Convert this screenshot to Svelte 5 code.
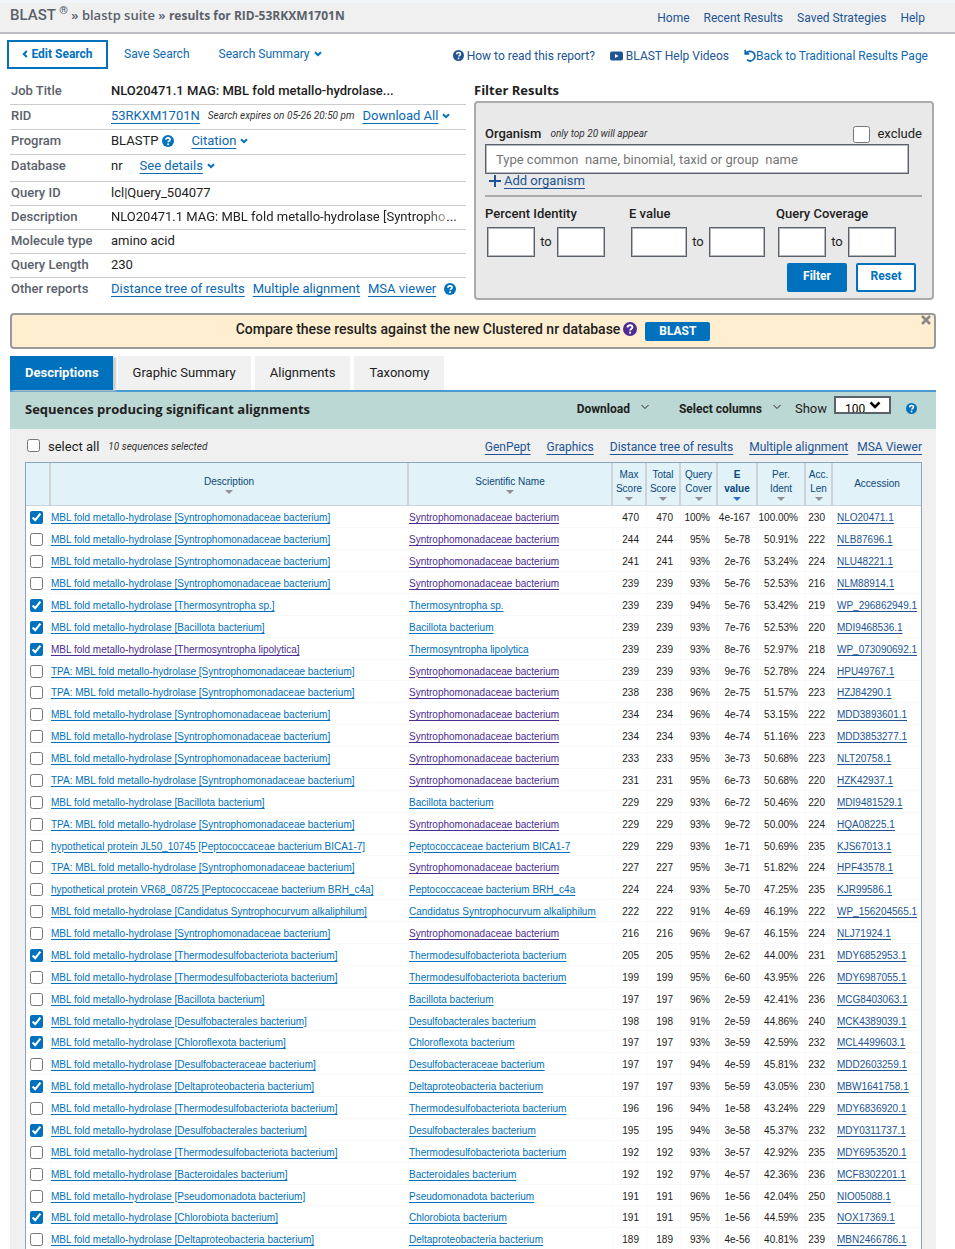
<script>
  const S = 'Syntrophomonadaceae bacterium';
  const M = 'MBL fold metallo-hydrolase';
  const T = 'TPA: MBL fold metallo-hydrolase';
  const TD = 'Thermodesulfobacteriota bacterium';
  // title, organism, score, cover, e value, identity, length, accession, selected
  const hits = [
    [M, S, 470, '100%', '4e-167', '100.00%', 230, 'NLO20471.1', true],
    [M, S, 244, '95%', '5e-78', '50.91%', 222, 'NLB87696.1', false],
    [M, S, 241, '93%', '2e-76', '53.24%', 224, 'NLU48221.1', false],
    [M, S, 239, '93%', '5e-76', '52.53%', 216, 'NLM88914.1', false],
    [M, 'Thermosyntropha sp.', 239, '94%', '5e-76', '53.42%', 219, 'WP_296862949.1', true],
    [M, 'Bacillota bacterium', 239, '93%', '7e-76', '52.53%', 220, 'MDI9468536.1', true],
    [M, 'Thermosyntropha lipolytica', 239, '93%', '8e-76', '52.97%', 218, 'WP_073090692.1', true],
    [T, S, 239, '93%', '9e-76', '52.78%', 224, 'HPU49767.1', false],
    [T, S, 238, '96%', '2e-75', '51.57%', 223, 'HZJ84290.1', false],
    [M, S, 234, '96%', '4e-74', '53.15%', 222, 'MDD3893601.1', false],
    [M, S, 234, '93%', '4e-74', '51.16%', 223, 'MDD3853277.1', false],
    [M, S, 233, '95%', '3e-73', '50.68%', 223, 'NLT20758.1', false],
    [T, S, 231, '95%', '6e-73', '50.68%', 220, 'HZK42937.1', false],
    [M, 'Bacillota bacterium', 229, '93%', '6e-72', '50.46%', 220, 'MDI9481529.1', false],
    [T, S, 229, '93%', '9e-72', '50.00%', 224, 'HQA08225.1', false],
    ['hypothetical protein JL50_10745', 'Peptococcaceae bacterium BICA1-7', 229, '93%', '1e-71', '50.69%', 235, 'KJS67013.1', false],
    [T, S, 227, '95%', '3e-71', '51.82%', 224, 'HPF43578.1', false],
    ['hypothetical protein VR68_08725', 'Peptococcaceae bacterium BRH_c4a', 224, '93%', '5e-70', '47.25%', 235, 'KJR99586.1', false],
    [M, 'Candidatus Syntrophocurvum alkaliphilum', 222, '91%', '4e-69', '46.19%', 222, 'WP_156204565.1', false],
    [M, S, 216, '96%', '9e-67', '46.15%', 224, 'NLJ71924.1', false],
    [M, TD, 205, '95%', '2e-62', '44.00%', 231, 'MDY6852953.1', true],
    [M, TD, 199, '95%', '6e-60', '43.95%', 226, 'MDY6987055.1', false],
    [M, 'Bacillota bacterium', 197, '96%', '2e-59', '42.41%', 236, 'MCG8403063.1', false],
    [M, 'Desulfobacterales bacterium', 198, '91%', '2e-59', '44.86%', 240, 'MCK4389039.1', true],
    [M, 'Chloroflexota bacterium', 197, '93%', '3e-59', '42.59%', 232, 'MCL4499603.1', true],
    [M, 'Desulfobacteraceae bacterium', 197, '94%', '4e-59', '45.81%', 232, 'MDD2603259.1', false],
    [M, 'Deltaproteobacteria bacterium', 197, '93%', '5e-59', '43.05%', 230, 'MBW1641758.1', true],
    [M, TD, 196, '94%', '1e-58', '43.24%', 229, 'MDY6836920.1', false],
    [M, 'Desulfobacterales bacterium', 195, '94%', '3e-58', '45.37%', 232, 'MDY0311737.1', true],
    [M, TD, 192, '93%', '3e-57', '42.92%', 235, 'MDY6953520.1', false],
    [M, 'Bacteroidales bacterium', 192, '97%', '4e-57', '42.36%', 236, 'MCF8302201.1', false],
    [M, 'Pseudomonadota bacterium', 191, '96%', '1e-56', '42.04%', 250, 'NIO05088.1', false],
    [M, 'Chlorobiota bacterium', 191, '95%', '1e-56', '44.59%', 235, 'NOX17369.1', true],
    [M, 'Deltaproteobacteria bacterium', 189, '93%', '4e-56', '40.81%', 239, 'MBN2466786.1', false]
  ].map(([title, organism, score, cover, evalue, identity, length, accession, selected]) => ({
    title, organism, score, cover, evalue, identity, length, accession, selected
  }));

  const narrow = [
    ['Max', 'Score'],
    ['Total', 'Score'],
    ['Query', 'Cover'],
    ['E', 'value'],
    ['Per.', 'Ident'],
    ['Acc.', 'Len']
  ];
  const ranges = [
    { name: 'Percent Identity', size: 'small' },
    { name: 'E value', size: 'large' },
    { name: 'Query Coverage', size: 'small' }
  ];
</script>

{#snippet help()}
  <svg class="help" viewBox="0 0 16 16" aria-hidden="true">
    <circle cx="8" cy="8" r="8" fill="currentColor" />
    <path d="M5.2 6.300C5.300 4.600 6.400 3.800 8 3.800c1.700 0 2.800.9 2.800 2.300 0 1.900-2.600 1.900-2.600 3.500" fill="none" stroke="#fff" stroke-width="2.200" />
    <circle cx="8.100" cy="12.200" r="1.300" fill="#fff" />
  </svg>
{/snippet}

{#snippet caret()}
  <svg class="caret" viewBox="0 0 8 6" aria-hidden="true">
    <path d="M1 1.200 4 4.200 7 1.200" fill="none" stroke="currentColor" stroke-width="2" />
  </svg>
{/snippet}

<div class="page">
  <header>
    <h1><span class="brand">BLAST <sup>®</sup></span> » blastp suite » <b>results for RID-53RKXM1701N</b></h1>
    <nav>
      <a href="#home">Home</a>
      <a href="#recent">Recent Results</a>
      <a href="#saved">Saved Strategies</a>
      <a href="#help">Help</a>
    </nav>
  </header>

  <div class="actions">
    <div class="left">
      <button class="edit">
        <svg viewBox="0 0 6 8" width="6" height="8" aria-hidden="true"><path d="M4.800 1 1.800 4 4.800 7" fill="none" stroke="currentColor" stroke-width="2" /></svg>
        Edit Search
      </button>
      <a href="#save">Save Search</a>
      <a href="#summary" class="summary">Search Summary {@render caret()}</a>
    </div>
    <div class="right">
      <a class="deep" href="#read">{@render help()} How to read this report?</a>
      <a class="deep" href="#videos">
        <svg viewBox="0 0 13 10" width="13" height="10" aria-hidden="true"><rect width="13" height="9" y=".5" rx="2" fill="currentColor" /><path d="M5 3v4l3.500-2z" fill="#fff" /></svg>
        BLAST Help Videos</a>
      <a href="#traditional"><svg viewBox="0 0 12 13" width="12" height="13" aria-hidden="true"><path d="M1.200.8v4h4M1.500 4.600C3.500 2.200 7 1.400 9.400 3.600c2 1.900 2 5 0 6.900-1.800 1.700-4.500 1.700-6.300.2" fill="none" stroke="currentColor" stroke-width="1.700" /></svg>Back to Traditional Results Page</a>
    </div>
  </div>

  <div class="top">
    <dl>
      <div class="tall"><dt>Job Title</dt><dd class="strong">NLO20471.1 MAG: MBL fold metallo-hydrolase...</dd></div>
      <div class="tall"><dt>RID</dt><dd><a href="#rid">53RKXM1701N</a><i class="ml8">Search expires on 05-26 20:50 pm</i><a class="ml8" href="#all">Download All</a>{@render caret()}</dd></div>
      <div class="tall"><dt>Program</dt><dd>BLASTP<span class="gap4 blue">{@render help()}</span><a class="ml16" href="#cite">Citation</a>{@render caret()}</dd></div>
      <div class="taller"><dt>Database</dt><dd>nr<a class="ml16" href="#details">See details</a>{@render caret()}</dd></div>
      <div><dt>Query ID</dt><dd>lcl|Query_504077</dd></div>
      <div><dt>Description</dt><dd><span class="fade">NLO20471.1 MAG: MBL fold metallo-hydrolase [Syntropho</span><span class="more">...</span></dd></div>
      <div><dt>Molecule type</dt><dd>amino acid</dd></div>
      <div><dt>Query Length</dt><dd>230</dd></div>
      <div><dt>Other reports</dt><dd class="reports"><a href="#tree">Distance tree of results</a><a href="#multi">Multiple alignment</a><a href="#msa">MSA viewer</a><span class="blue">{@render help()}</span></dd></div>
    </dl>

    <section class="filter">
      <h2>Filter Results</h2>
      <form onsubmit={(e) => e.preventDefault()}>
        <div class="organism">
          <label class="strong" for="organism">Organism</label>
          <i>only top 20 will appear</i>
          <label class="exclude"><input type="checkbox" /> exclude</label>
        </div>
        <input id="organism" class="wide" type="text" placeholder="Type common  name, binomial, taxid or group  name" />
        <div class="add">
          <svg viewBox="0 0 12 12" width="12" height="12" aria-hidden="true"><path d="M6 0v12M0 6h12" stroke="currentColor" stroke-width="2" /></svg>
          <a href="#add">Add organism</a>
        </div>
        <hr />
        <div class="ranges">
          {#each ranges as r}
            <fieldset class={r.size}>
              <legend>{r.name}</legend>
              <div>
                <input type="text" aria-label="{r.name} from" />
                <span>to</span>
                <input type="text" aria-label="{r.name} to" />
              </div>
            </fieldset>
          {/each}
        </div>
        <div class="buttons">
          <button class="solid">Filter</button>
          <button type="reset">Reset</button>
        </div>
      </form>
    </section>
  </div>

  <div class="banner">
    <span>Compare these results against the new Clustered nr database</span>
    <span class="purple">{@render help()}</span>
    <button>BLAST</button>
    <button class="close" aria-label="Close">
      <svg viewBox="0 0 10 10" width="10" height="10" aria-hidden="true"><path d="M1 1l8 8M9 1 1 9" stroke="#888" stroke-width="2.500" /></svg>
    </button>
  </div>

  <div class="tabs">
    <button class="active">Descriptions</button>
    <button>Graphic Summary</button>
    <button>Alignments</button>
    <button>Taxonomy</button>
  </div>

  <section class="panel">
    <div class="bar">
      <h2>Sequences producing significant alignments</h2>
      <div class="tools">
        <button>Download <svg viewBox="0 0 8 6" width="8" height="6" aria-hidden="true"><path d="M.5 1 4 4.500 7.500 1" fill="none" stroke="currentColor" /></svg></button>
        <button class="columns">Select columns <svg viewBox="0 0 8 6" width="8" height="6" aria-hidden="true"><path d="M.5 1 4 4.500 7.500 1" fill="none" stroke="currentColor" /></svg></button>
        <label for="show">Show</label>
        <span class="select">
          <select id="show"><option>100</option></select>
          <svg viewBox="0 0 12 8" width="12" height="8" aria-hidden="true"><path d="M1.500 1.500 6 6 10.500 1.500" fill="none" stroke="#000" stroke-width="2.500" /></svg>
        </span>
        <span class="blue tiny">{@render help()}</span>
      </div>
    </div>

    <div class="selection">
      <label><input type="checkbox" /> select all</label>
      <i>10 sequences selected</i>
      <div class="links">
        <a href="#genpept">GenPept</a>
        <a href="#graphics">Graphics</a>
        <a href="#dtree">Distance tree of results</a>
        <a href="#malign">Multiple alignment</a>
        <a href="#msav" class="near">MSA Viewer</a>
      </div>
    </div>

    <table>
      <colgroup>
        <col class="c-check" /><col /><col class="c-name" /><col class="c-score" /><col class="c-score" />
        <col class="c-cover" /><col class="c-evalue" /><col class="c-ident" /><col class="c-len" /><col class="c-acc" />
      </colgroup>
      <thead>
        <tr>
          <th></th>
          <th>Description<span class="sort"></span></th>
          <th>Scientific Name<span class="sort"></span></th>
          {#each narrow as [a, b]}
            <th class:sorted={a === 'E'}>{a}<br />{b}<span class="sort"></span></th>
          {/each}
          <th>Accession</th>
        </tr>
      </thead>
      <tbody>
        {#each hits as h}
          <tr>
            <td class="check"><input type="checkbox" checked={h.selected} aria-label="Select {h.accession}" /></td>
            <td><a class:visited={h.organism === 'Thermosyntropha lipolytica'} href="#{h.accession}">{h.title} [{h.organism}]</a></td>
            <td><a class:visited={h.organism === S} href="#org-{h.accession}">{h.organism}</a></td>
            <td class="num">{h.score}</td>
            <td class="num">{h.score}</td>
            <td class="num">{h.cover}</td>
            <td class="num">{h.evalue}</td>
            <td class="num">{h.identity}</td>
            <td class="num">{h.length}</td>
            <td class="acc"><a href="#acc-{h.accession}">{h.accession}</a></td>
          </tr>
        {/each}
      </tbody>
    </table>
  </section>
</div>

<style>
  :global(body) { margin: 0; background: #fff; }
  .page {
    font: 13px/22px Roboto, 'Liberation Sans', sans-serif;
    color: #212121;
  }
  a { color: #0b68b3; text-decoration-thickness: 1px; text-underline-offset: 3px; }
  button { font: 700 13px/20px Roboto, sans-serif; cursor: pointer; box-sizing: border-box; }
  i { font-size: 10px; color: #333; }
  .strong { font-weight: 500; }
  svg { flex: none; }
  .help { width: 12px; height: 12px; }
  .caret { width: 8px; height: 6px; color: #0071bc; }
  .blue { color: #0071bc; }
  .purple { color: #4c2c92; }
  input[type='checkbox'] { margin: 0; width: 13px; height: 13px; accent-color: #0071bc; }
  input[type='text'] { box-sizing: border-box; border: 1px solid #5b616b; box-shadow: inset 0 0 0 1px #b4b7bc; background: #fff; font: 13px Roboto, sans-serif; }

  header {
    display: flex;
    justify-content: space-between;
    align-items: center;
    box-sizing: border-box;
    height: 34px;
    padding: 0 30px 0 10px;
    border-top: 3px solid #f1f4f9;
    border-bottom: 2px solid #bdbbc2;
    background: #f0f0f0;
  }
  h1 { margin: 0; padding-bottom: 4px; font: 600 13px/24px 'Open Sans', sans-serif; color: #5b616b; white-space: nowrap; }
  h1 b { font-size: 12px; font-weight: 700; }
  .brand { font: 500 15px/24px Roboto, sans-serif; }
  sup { font-size: 11px; line-height: 0; }
  nav { display: flex; gap: 14px; font-size: 12px; }
  nav a { color: #205493; text-decoration: none; }

  .actions { display: flex; justify-content: space-between; padding: 6px 27px 0 7px; height: 40px; box-sizing: border-box; }
  .actions a { text-decoration: none; font-size: 12px; display: flex; align-items: center; gap: 4px; }
  .left { display: flex; align-items: center; height: 29px; }
  .left a, .left button { padding-bottom: 2px; }
  .edit { display: flex; align-items: center; justify-content: center; gap: 3px; width: 101px; height: 29px; padding: 0; margin-right: 16px; border: 2px solid #0071bc; background: #fff; color: #0071bc; font-size: 12px; }
  .left .summary { margin-left: 29px; }
  .right { display: flex; align-items: center; gap: 15px; height: 31px; }
  .right .deep { color: #205493; gap: 3px; }
  .right .help { width: 11px; height: 11px; }
  .right a:last-child { gap: 0; }

  .top { display: grid; grid-template-columns: 456fr 460fr; gap: 8px; padding: 6px 21px 0 10px; }
  dl { margin: 0; }
  dl > div { display: flex; box-sizing: border-box; height: 24px; border-bottom: 1px solid #ccc; white-space: nowrap; }
  dl > div.tall { height: 25px; }
  dl > div.taller { height: 27px; }
  dl > div:last-child { border: 0; }
  dt { width: 101px; padding-left: 1px; box-sizing: border-box; flex: none; font-weight: 500; color: #5b616b; }
  dd { margin: 0; display: flex; align-items: center; height: 22px; flex: 1; min-width: 0; }
  dd .caret { margin-left: 4px; }
  .ml8 { margin-left: 8px; }
  .ml16 { margin-left: 17px; }
  .gap4 { margin-left: 4px; }
  dd .blue { display: flex; }
  .fade { overflow: hidden; mask-image: linear-gradient(90deg, #000 94%, #0006); }
  .more { margin-left: 1px; }
  .reports { gap: 8px; }

  .filter h2 { margin: 0; font: 700 13px/21px 'Open Sans', sans-serif; }
  form { box-sizing: border-box; min-height: 199px; padding: 21px 10px 0 9px; border: 2px solid #ababab; border-radius: 4px; background: #e9e9e9; }
  .organism { display: flex; align-items: center; height: 20px; }
  .organism i { margin-left: 9px; }
  .exclude { display: flex; align-items: center; gap: 7px; margin-left: auto; }
  .exclude input { width: 17px; height: 17px; }
  .wide { display: block; width: calc(100% - 13px); height: 30px; padding: 0 10px; }
  .wide::placeholder { color: #757575; opacity: 1; }
  .add { display: flex; align-items: center; gap: 3px; height: 13px; padding-left: 4px; color: #205493; }
  .add a { color: #205493; }
  hr { margin: 8px 0 7px; border: 0; border-top: 2px solid #aaa; }
  .ranges { display: flex; }
  fieldset { margin: 0; padding: 0; border: 0; min-width: 0; width: 144px; }
  fieldset.large { width: 147px; }
  legend { padding: 0; font-weight: 500; line-height: 20px; }
  fieldset div { display: flex; align-items: center; justify-content: space-between; margin: 3px 0 0 2px; width: 118px; }
  fieldset.large div { width: 134px; }
  fieldset input { width: 48px; height: 30px; }
  fieldset.large input { width: 56px; }
  .buttons { display: flex; justify-content: flex-end; gap: 9px; margin: 6px 6px 0 0; }
  .buttons button { width: 60px; height: 29px; padding: 0 0 4px; border: 2px solid #0071bc; border-radius: 2px; background: #fff; color: #0071bc; font-size: 12px; }
  .buttons .solid { background: #0071bc; color: #fff; }

  .banner { position: relative; display: flex; align-items: center; justify-content: center; box-sizing: border-box; height: 36px; margin: 11px 19px 0 10px; border: 2px solid #9a9a9a; border-radius: 4px; background: #ffeed0; font-size: 14px; font-weight: 500; padding-bottom: 4px; }
  .banner .help { display: block; width: 14px; height: 14px; margin-left: 3px; }
  .banner button { width: 65px; height: 19px; margin: 4px 0 0 8px; padding: 0; border: 0; border-radius: 2px; background: #0071bc; color: #fff; font-size: 12px; line-height: 16px; }
  .banner .close { position: absolute; top: 0; right: 3px; width: 10px; height: 10px; margin: 0; background: none; line-height: 0; }

  .tabs { display: flex; gap: 4px; margin: 7px 19px 0 10px; }
  .tabs button { height: 34px; padding: 0 15px; border: 0; background: #f1f1f1; color: #212121; font-weight: 400; }
  .tabs .active { margin-right: 1px; padding: 0 14px 0 15px; background: #0071bc; color: #fff; font-weight: 700; box-shadow: 3px 1px 2px #ccc; }

  .panel { margin: 0 19px 0 10px; padding-bottom: 20px; border-top: 2px solid #4a9bd1; background: #f0f0f0; }
  .bar { display: flex; align-items: center; justify-content: space-between; height: 37px; padding: 0 19px 4px 15px; box-sizing: border-box; background: #bcd8d4; }
  .bar h2 { margin: 0; font: 700 13px/20px 'Open Sans', sans-serif; }
  .tools { display: flex; align-items: center; font-size: 12px; }
  .tools button { padding: 0; border: 0; background: none; color: #212121; font-size: 12px; }
  .tools button svg { margin: 0 0 3px 8px; }
  .tools .columns { margin-left: 30px; }
  .tools label { margin: 0 7px 0 14px; font-size: 13px; }
  .select { position: relative; display: flex; height: 18px; width: 57px; margin-bottom: 7px; box-sizing: border-box; border: 2px solid #5b616b; background: #fff; overflow: hidden; }
  .select select { appearance: none; width: 100%; height: 20px; padding: 3px 0 0 9px; border: 0; background: none; font: 12px/17px Roboto, sans-serif; }
  .select svg { position: absolute; right: 8px; top: 3px; pointer-events: none; }
  .tiny { display: flex; margin-left: 15px; }
  .tiny .help { width: 11px; height: 11px; }

  .selection { display: flex; align-items: center; height: 33px; padding: 2px 14px 0 17px; box-sizing: border-box; }
  .selection label { display: flex; align-items: center; gap: 8px; }
  .selection label input { margin-bottom: 3px; }
  .selection i { margin-left: 9px; }
  .links { display: flex; gap: 16px; margin-left: auto; font-size: 12px; }
  .links a { color: #205493; }
  .links .near { margin-left: -7px; }

  table { width: calc(100% - 29px); margin-left: 15px; table-layout: fixed; border-collapse: separate; border-spacing: 0; border: 1px solid #8ba6c1; background: #fff; font: 10px/14px 'Liberation Sans', Arial, sans-serif; box-sizing: border-box; }
  .c-check { width: 25px; }
  .c-name { width: 204px; }
  .c-score { width: 34px; }
  .c-cover { width: 37px; }
  .c-evalue { width: 40px; }
  .c-ident { width: 48px; }
  .c-len { width: 27px; }
  .c-acc { width: 88px; }
  th { height: 43px; box-sizing: border-box; padding: 0; border-right: 2px solid #cfd3d8; border-bottom: 1px solid #c9d3e0; background: #e1f2f8; color: #0b4778; font-weight: 400; }
  th:last-child { border-right: 0; }
  th.sorted { font-weight: 700; }
  .sort { display: block; width: 0; margin: 1px auto 0; border: 4px solid transparent; border-top-color: #8f8f94; border-bottom: 0; }
  .sorted .sort { border-top-color: #2d6fd0; }
  td { height: 22px; padding: 3px 0 0; box-sizing: border-box; border-bottom: 1px solid #f8f8f8; border-right: 1px solid #fafafa; white-space: nowrap; }
  tr:nth-child(8n) td { height: 21px; }
  td a { color: #0071bc; text-underline-offset: 2px; }
  td a.visited { color: #4c2c92; }
  td.check { padding: 2px 0 0 4px; line-height: 0; }
  .num { padding-right: 7px; text-align: right; }
  .acc { padding-left: 4px; }
  .acc a { color: #205493; }
</style>
